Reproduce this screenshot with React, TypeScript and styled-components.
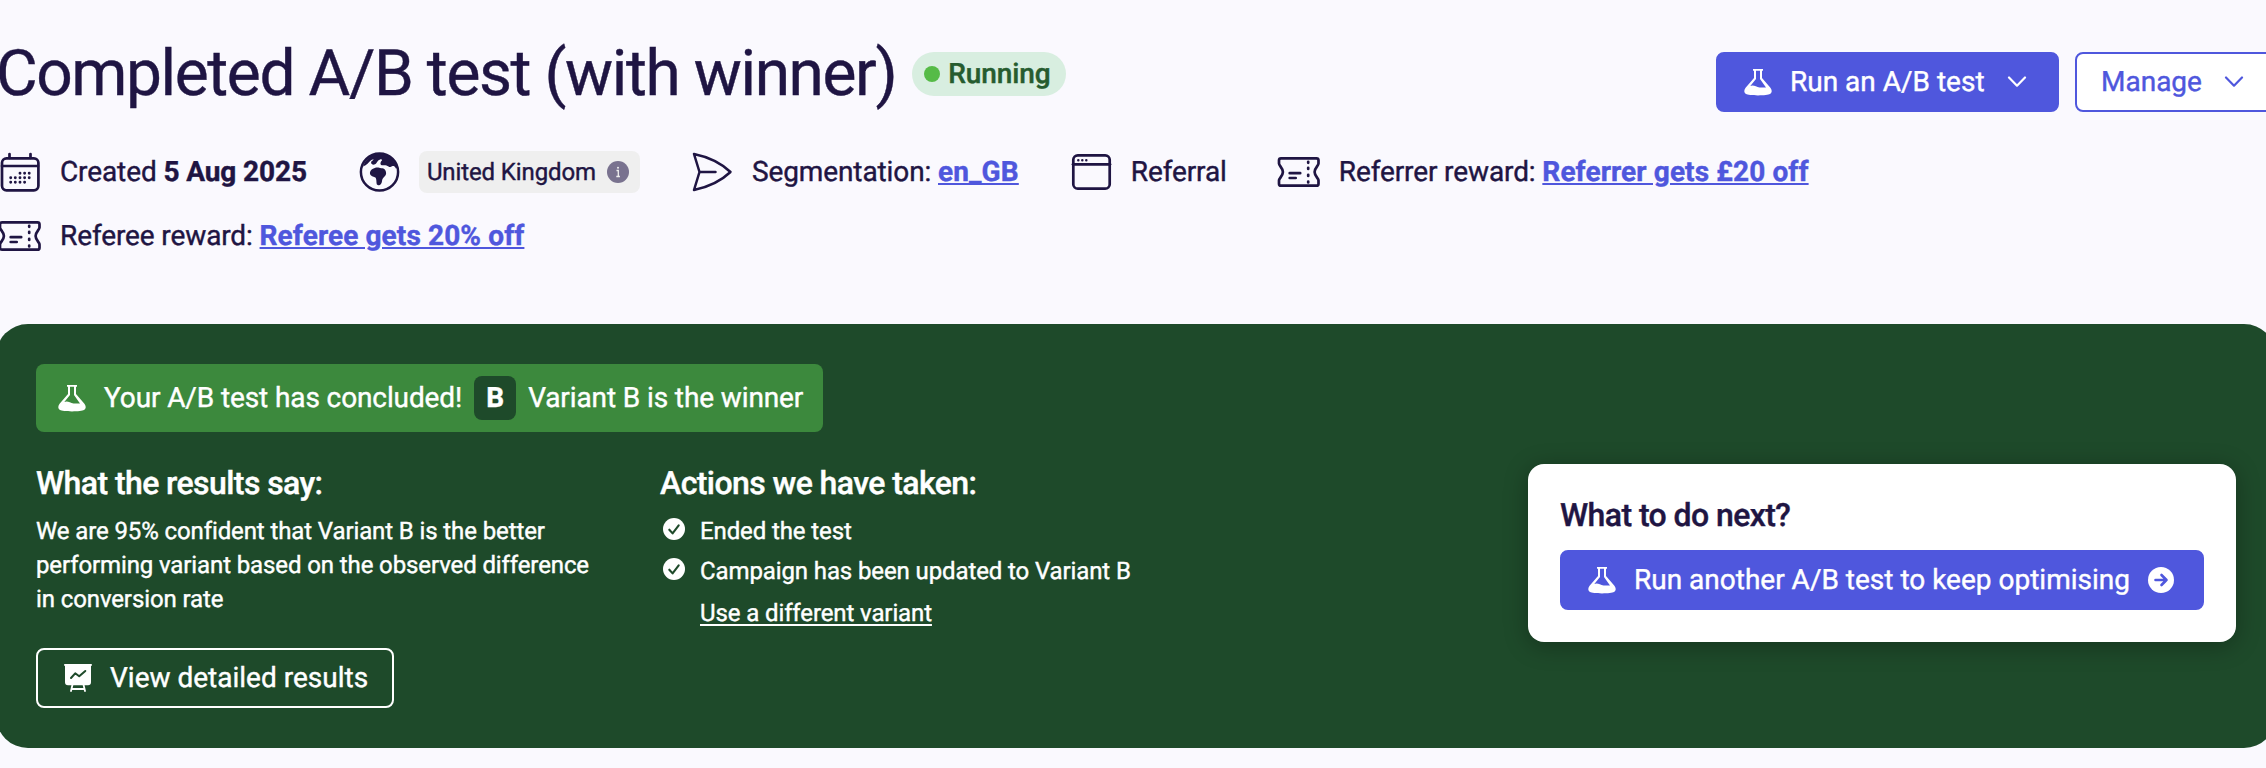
import React from "react";
import styled, { createGlobalStyle } from "styled-components";

const ink = "#1f1543";
const indigo = "#4f57dd";
const forest = "#1e4a2a";

const GlobalStyle = createGlobalStyle`
  html, body { margin: 0; padding: 0; }
  body {
    background: #faf9fe;
    color: ${ink};
    font-family: Roboto, "Liberation Sans", sans-serif;
    font-size: 28px;
    letter-spacing: -0.11px;
    overflow: hidden;
    -webkit-font-smoothing: antialiased;
    text-rendering: geometricPrecision;
    -webkit-text-stroke: 0.4px currentColor;
  }
  * { box-sizing: border-box; }
`;

const Page = styled.main`
  width: 2280px;
  height: 768px;
  margin-left: -4px;
  padding-top: 36px;
  overflow: hidden;
`;

const Header = styled.header`
  display: flex;
  justify-content: space-between;
  height: 76px;
`;

const TitleGroup = styled.div`
  display: flex;
  align-items: center;
  gap: 16px;
  height: 76px;
`;

const Title = styled.h1`
  margin: 0;
  font-size: 64px;
  line-height: 76px;
  font-weight: 400;
  letter-spacing: -1.4px;
  white-space: nowrap;
`;

const Status = styled.span`
  display: flex;
  align-items: center;
  gap: 8px;
  height: 44px;
  padding: 0 16px 1px 12px;
  border-radius: 22px;
  background: #d8eee0;
  color: #265c2f;
  font-weight: 500;
`;

const StatusDot = styled.i`
  width: 16px;
  height: 16px;
  border-radius: 50%;
  background: #56bb47;
`;

const Actions = styled.div`
  display: flex;
  gap: 16px;
  padding-top: 16px;
`;

const Button = styled.button<{ $kind: "solid" | "light" | "ghost"; $width: number }>`
  display: flex;
  align-items: center;
  gap: 18px;
  width: ${(p) => p.$width}px;
  height: 60px;
  padding: 0 ${(p) => (p.$kind === "light" ? 24 : 26)}px;
  border: 2px solid ${(p) => (p.$kind === "ghost" ? "#fff" : indigo)};
  border-radius: 8px;
  background: ${(p) => (p.$kind === "solid" ? indigo : p.$kind === "light" ? "#fff" : "transparent")};
  color: ${(p) => (p.$kind === "light" ? indigo : "#fff")};
  font: 400 28px/40px Roboto, "Liberation Sans", sans-serif;
  letter-spacing: 0;
  text-rendering: inherit;
  white-space: nowrap;
  svg { flex: none; }
`;

const Meta = styled.ul`
  display: flex;
  flex-wrap: wrap;
  gap: 16px 48px;
  width: 1900px;
  margin: 36px 0 0;
  padding: 0;
  list-style: none;
`;

const MetaItem = styled.li`
  display: flex;
  align-items: center;
  gap: 16px;
  height: 48px;
  line-height: 40px;
  white-space: nowrap;
  svg { flex: none; }
`;

const MetaLink = styled.a`
  color: ${indigo};
  font-weight: 700;
  letter-spacing: 0.11px;
  text-decoration: underline;
`;

const Country = styled.span`
  display: flex;
  align-items: center;
  gap: 11px;
  height: 42px;
  padding: 0 11px 0 8px;
  border-radius: 8px;
  background: #efefef;
  font-size: 24px;
`;

const Result = styled.section`
  height: 424px;
  margin-top: 64px;
  padding: 40px;
  border-radius: 32px;
  background: ${forest};
  color: #fff;
`;

const Banner = styled.div`
  display: flex;
  align-items: center;
  width: fit-content;
  height: 68px;
  padding: 0 20px;
  border-radius: 8px;
  background: #3c893d;
  line-height: 40px;
  white-space: nowrap;
  svg { margin: 0 18px 0 2px; }
`;

const VariantChip = styled.b`
  width: 42px;
  margin: 0 12px;
  border-radius: 8px;
  background: ${forest};
  line-height: 44px;
  text-align: center;
`;

const Columns = styled.div`
  display: flex;
  margin-top: 32px;
`;

const Column = styled.div<{ $width: number }>`
  width: ${(p) => p.$width}px;
  font-size: 24px;
  line-height: 34px;
`;

const Heading = styled.h2`
  margin: 0;
  font-size: 32px;
  line-height: 38px;
  font-weight: 500;
  letter-spacing: -0.58px;
  white-space: nowrap;
`;

const Summary = styled.p`
  width: 570px;
  margin: 12px 0 32px;
`;

const Steps = styled.ul`
  display: flex;
  flex-direction: column;
  gap: 6px;
  margin: 12px 0 8px;
  padding: 0;
  list-style: none;
`;

const Step = styled.li`
  display: flex;
  gap: 15px;
  padding-left: 3px;
  white-space: nowrap;
  svg { flex: none; margin-top: 3px; }
`;

const VariantLink = styled.a`
  margin-left: 40px;
  color: inherit;
  text-decoration: underline;
  text-underline-offset: 3px;
`;

const NextCard = styled.aside`
  width: 708px;
  height: 178px;
  margin-left: auto;
  padding: 32px;
  border-radius: 16px;
  background: #fff;
  color: ${ink};
  box-shadow: 0 4px 24px rgba(0, 0, 0, 0.3);
`;

const NextHeading = styled(Heading)`
  margin-bottom: 16px;
`;

const ChevronSvg = styled.svg`
  margin-left: 4px;
`;

const Flask = () => (
  <svg width="28" height="28" viewBox="0 0 28 28" fill="currentColor">
    <path
      fillRule="evenodd"
      d="M9 1h10v1.8h-1V10l8.4 9.8c1.9 2.5 1.7 5-.5 6.3-1.1.9-6.2 1.3-11.900 1.300s-10.800-.4-11.900-1.300c-2.200-1.300-2.400-3.800-.5-6.300L10 10V2.800H9zM12 2.800V11l-5.700 7c3-1.600 5.800.8 9.200 1.400 2.700.5 4.600-.2 6.500.1L16 11V2.800z"
    />
  </svg>
);

const Chevron = () => (
  <ChevronSvg width="20" height="12" viewBox="0 0 20 12" fill="none" stroke="currentColor" strokeWidth="2.200" strokeLinecap="round" strokeLinejoin="round">
    <path d="M2 1.500l8 8.200 8-8.200" />
  </ChevronSvg>
);

const line = { fill: "none", stroke: ink, strokeLinecap: "round" as const, strokeLinejoin: "round" as const };

const CalendarIcon = () => (
  <svg width="48" height="48" viewBox="0 0 48 48" {...line} strokeWidth="2.700">
    <rect x="6" y="10.300" width="36.400" height="32" rx="4.500" />
    <path d="M6 18h36M13.500 6v4M34.500 6v4" />
    <path strokeWidth="2.900" d="M24 25.300h.01M28.600 25.300h.01M33.200 25.300h.01M14.700 29.800h.01M19.300 29.800h.01M24 29.800h.01M28.600 29.800h.01M33.200 29.800h.01M14.700 34.300h.01M19.300 34.300h.01M24 34.300h.01M28.600 34.300h.01" />
  </svg>
);

const GlobeIcon = () => (
  <svg width="48" height="48" viewBox="0 0 48 48">
    <circle cx="24.500" cy="24" r="18.600" {...line} strokeWidth="2.500" />
    <path
      fill={ink}
      d="M8 18.500c1.500-5 5.500-9.500 10-11.500 4-1.700 9-1.700 13 0 5 2.200 9.500 7 11 12.500-.3 1.500-1 1.300-1.500.2-1-2.200-2.500-2-3.600-1.400-1 1-2.400.8-3.400.1-1.500-.8-3-1.400-5-1.200-2.200.2-3.300-.7-3-2.300.2-1.600 1.800-2 1.500-3.100-.4-1.200-2.400-.4-3.700.8-1.600 1.400-1.900 3.600-4 4-1.900.3-3.400-.9-3.200-2.300.2-1.700 2.400-1.600 2.500-3-2.700 0-3.800 2.500-5.800 4.200-1.300 1.300-3 2.200-4.800 3z"
    />
    <path
      fill={ink}
      d="M17.500 21c2-1.500 5-2 6.700-1.200 1.300.8 2.600.1 4.200.8 1.700.7 2.900 2.900 2.700 5.200-.2 2.200-2.700 3.300-3.600 5.200-.7 1.600-.3 3.300-1.500 4.900-1.100 1.500-3.900 1.900-4.300.2-.4-1.900-.1-4.600-1-6.300-.9-1.200-3.300-.9-4.900-2.600-1.700-1.900-.6-4.800 1.700-6.200z"
    />
  </svg>
);

const SendIcon = () => (
  <svg width="48" height="48" viewBox="0 0 48 48" {...line} strokeWidth="2.500">
    <path d="M6 6C20.500 9 33.500 15.500 42.500 24 33.500 32.500 20.500 39 6 42L11.500 24zM11.500 24h16" />
  </svg>
);

const WindowIcon = () => (
  <svg width="48" height="48" viewBox="0 0 48 48" {...line} strokeWidth="2.700">
    <rect x="6.300" y="7.300" width="36.400" height="33.400" rx="4.500" />
    <path d="M6 16.300h37" />
    <path strokeWidth="2.500" d="M11.300 12.200h.01M15.300 12.200h.01M19.300 12.200h.01" />
  </svg>
);

const TicketIcon = () => (
  <svg width="48" height="48" viewBox="0 0 48 48" {...line} strokeWidth="2.700">
    <path d="M6 10.300h35.500q2 0 2 2v3.300c0 2-3.900 4.300-3.900 8.400s3.900 6.400 3.900 8.400v3.300q0 2-2 2H6q-2 0-2-2v-3.300c0-2 3.900-4.300 3.900-8.400S4 17.600 4 15.600v-3.300q0-2 2-2z" />
    <path d="M14.700 25.200h10.500M14.700 30h6M33.200 13.800v1M33.200 19.800v1.200M33.200 26.800v1.200M33.200 33.500v1" />
  </svg>
);

const InfoIcon = () => (
  <svg width="22" height="22" viewBox="0 0 22 22">
    <circle cx="11" cy="11" r="11" fill="#79728f" />
    <path d="M9.500 9.500h1.800v6M9.300 15.500h3.600" fill="none" stroke="#efefef" strokeWidth="1.300" />
    <circle cx="11" cy="6.700" r="1" fill="#efefef" />
  </svg>
);

const CheckIcon = () => (
  <svg width="22" height="24" viewBox="0 0 22 24" fill="none">
    <circle cx="11" cy="12" r="11" fill="#fff" />
    <path d="M6.300 12.700l3.300 3.700 6.100-8" stroke={forest} strokeWidth="2.100" strokeLinecap="round" strokeLinejoin="round" />
  </svg>
);

const BoardIcon = () => (
  <svg width="28" height="28" viewBox="0 0 28 28" fill="none" strokeLinecap="round" strokeLinejoin="round">
    <path fill="#fff" d="M.8 0h26.400q.8 0 .8.900t-.8.900H27v16.400q0 3-3 3H4q-3 0-3-3V1.800H.8Q0 1.800 0 .900T.8 0z" />
    <path stroke="#fff" strokeWidth="1.800" d="M8.400 21l-1.400 6M19.600 21l1.400 6M7.500 25h13" />
    <path stroke={forest} strokeWidth="2" d="M7 14l4.200-4.700 4 3L21.300 7" />
  </svg>
);

const ArrowCircle = () => (
  <svg width="26" height="26" viewBox="0 0 26 26" fill="none">
    <circle cx="13" cy="13" r="13" fill="#fff" />
    <path d="M7.500 13h11M13.500 8l5 5-5 5" stroke={indigo} strokeWidth="2.600" strokeLinecap="round" strokeLinejoin="round" />
  </svg>
);

export default function App() {
  return (
    <Page>
      <GlobalStyle />
      <Header>
        <TitleGroup>
          <Title>Completed A/B test (with winner)</Title>
          <Status>
            <StatusDot />
            Running
          </Status>
        </TitleGroup>
        <Actions>
          <Button $kind="solid" $width={343}>
            <Flask />
            <span>Run an A/B test</span>
            <Chevron />
          </Button>
          <Button $kind="light" $width={201}>
            <span>Manage</span>
            <Chevron />
          </Button>
        </Actions>
      </Header>

      <Meta>
        <MetaItem>
          <CalendarIcon />
          <span>Created <b>5 Aug 2025</b></span>
        </MetaItem>
        <MetaItem>
          <GlobeIcon />
          <Country>
            United Kingdom
            <InfoIcon />
          </Country>
        </MetaItem>
        <MetaItem>
          <SendIcon />
          <span>Segmentation: <MetaLink>en_GB</MetaLink></span>
        </MetaItem>
        <MetaItem>
          <WindowIcon />
          <span>Referral</span>
        </MetaItem>
        <MetaItem>
          <TicketIcon />
          <span>Referrer reward: <MetaLink>Referrer gets £20 off</MetaLink></span>
        </MetaItem>
        <MetaItem>
          <TicketIcon />
          <span>Referee reward: <MetaLink>Referee gets 20% off</MetaLink></span>
        </MetaItem>
      </Meta>

      <Result>
        <Banner>
          <Flask />
          <span>Your A/B test has concluded!</span>
          <VariantChip>B</VariantChip>
          <span>Variant B is the winner</span>
        </Banner>
        <Columns>
          <Column $width={624}>
            <Heading>What the results say:</Heading>
            <Summary>
              We are 95% confident that Variant B is the better performing variant based on the observed difference in
              conversion rate
            </Summary>
            <Button $kind="ghost" $width={358}>
              <BoardIcon />
              <span>View detailed results</span>
            </Button>
          </Column>
          <Column $width={560}>
            <Heading>Actions we have taken:</Heading>
            <Steps>
              <Step>
                <CheckIcon />
                Ended the test
              </Step>
              <Step>
                <CheckIcon />
                Campaign has been updated to Variant B
              </Step>
            </Steps>
            <VariantLink>Use a different variant</VariantLink>
          </Column>
          <NextCard>
            <NextHeading>What to do next?</NextHeading>
            <Button $kind="solid" $width={644}>
              <Flask />
              <span>Run another A/B test to keep optimising</span>
              <ArrowCircle />
            </Button>
          </NextCard>
        </Columns>
      </Result>
    </Page>
  );
}
